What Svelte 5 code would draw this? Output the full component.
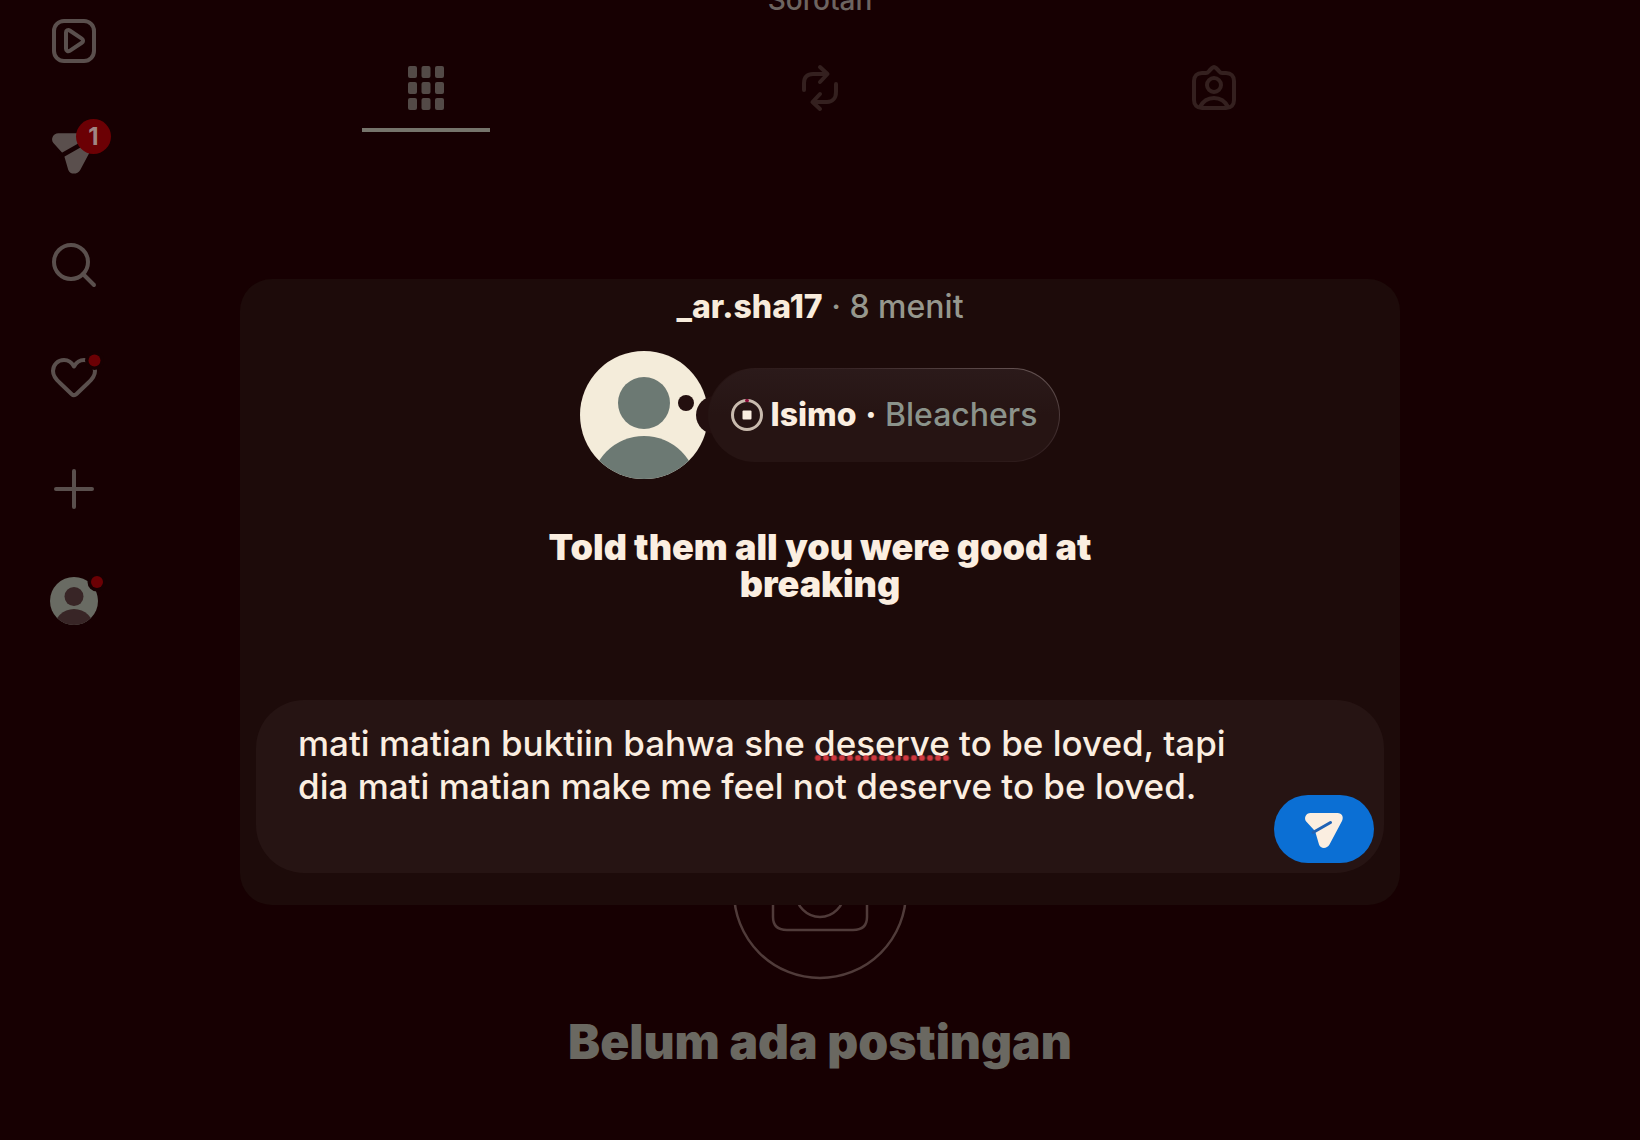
<script>
  const misspelled = "deserve";

  let draft = $state(
    "mati matian buktiin bahwa she deserve to be loved, tapi dia mati matian make me feel not deserve to be loved."
  );
  let activeTab = $state("posts");
  let input = $state(null);
  let mark = $state(null); // { left, width } of the spelling dots, in px

  const nav = [
    { id: "reels", label: "Reels" },
    { id: "messages", label: "Pesan" },
    { id: "search", label: "Cari" },
    { id: "activity", label: "Notifikasi" },
    { id: "create", label: "Buat" },
    { id: "profile", label: "Profil" },
  ];

  const tabs = [
    { id: "posts", label: "Postingan" },
    { id: "reposts", label: "Postingan ulang" },
    { id: "tagged", label: "Ditandai" },
  ];

  // only a hit on the first line gets the dots
  $effect(() => {
    const hit = draft.indexOf(misspelled);
    if (!input || hit < 0) {
      mark = null;
      return;
    }
    const ctx = document.createElement("canvas").getContext("2d");
    const css = getComputedStyle(input);
    ctx.font = `${css.fontWeight} ${css.fontSize} ${css.fontFamily}`;
    const left = Math.round(ctx.measureText(draft.slice(0, hit)).width);
    const width = Math.round(ctx.measureText(misspelled).width);
    mark = left + width <= input.clientWidth ? { left, width } : null;
  });
</script>

{#snippet plane()}
  <path
    class="solid"
    d="M5.5 0H32.5C37 0 39 4 37 8L24.5 31.5C22 36 15.5 36 14 31.5L10.5 19.5L9 17L1.2 8.5C-1.5 5 1 0 5.5 0Z"
  />
  <path class="slit" d="M8 19.5L25.5 9.5" />
{/snippet}

<div class="page">
  <nav class="sidebar" aria-label="Menu utama">
    {#each nav as item}
      <a href="#{item.id}" aria-label={item.label}>
        {#if item.id === "reels"}
          <svg width="48" height="48" viewBox="0 0 48 48">
            <rect x="4" y="4" width="40" height="40" rx="10" />
            <path d="M16 15.5C16 13.5 18 12.5 19.7 13.5L31.8 21.6C33.5 22.8 33.5 24.7 31.8 25.8L19.7 33.8C18 34.8 16 33.8 16 31.8Z" />
          </svg>
        {:else if item.id === "messages"}
          <svg width="44" height="41" viewBox="0 0 38 35">{@render plane()}</svg>
          <span class="badge">1</span>
        {:else if item.id === "search"}
          <svg width="48" height="48" viewBox="0 0 48 48">
            <circle cx="21" cy="21" r="17" />
            <path d="M33 33L44 44" />
          </svg>
        {:else if item.id === "activity"}
          <svg width="48" height="48" viewBox="0 0 48 48">
            <path
              d="M34 7C29.5 7 26.5 9 24 13.5C21.5 9 18.5 7 14 7C8 7 3 11.5 3 18C3 23 6 26.5 10 30L21.5 41C23.3 42.7 24.7 42.7 26.5 41L38 30C42 26.5 45 23 45 18C45 11.5 40 7 34 7Z"
            />
            <circle class="cutout" cx="44.5" cy="7.5" r="9.5" />
            <circle class="dot" cx="44.5" cy="7.5" r="6" />
          </svg>
        {:else if item.id === "create"}
          <svg width="48" height="48" viewBox="0 0 48 48">
            <path d="M24 6V42M6 24H42" />
          </svg>
        {:else}
          <svg width="48" height="48" viewBox="0 0 48 48">
            <clipPath id="me"><circle cx="24" cy="24" r="24" /></clipPath>
            <g clip-path="url(#me)">
              <rect class="me-bg" width="48" height="48" />
              <circle class="me-fg" cx="24" cy="19.5" r="9.5" />
              <circle class="me-fg" cx="24" cy="52" r="20" />
            </g>
            <circle class="cutout" cx="47" cy="5" r="9.5" />
            <circle class="dot" cx="47" cy="5" r="6" />
          </svg>
        {/if}
      </a>
    {/each}
  </nav>

  <main>
    <p class="highlight">Sorotan</p>

    <div class="tabs" role="tablist">
      {#each tabs as tab}
        <button
          type="button"
          role="tab"
          aria-label={tab.label}
          aria-selected={activeTab === tab.id}
          class:active={activeTab === tab.id}
          onclick={() => (activeTab = tab.id)}
        >
          <svg width="48" height="48" viewBox="0 0 48 48">
            {#if tab.id === "posts"}
              {#each [2, 18, 34] as y}
                {#each [6, 19.5, 33] as x}
                  <rect class="solid" {x} {y} width="9" height="12" rx="2" />
                {/each}
              {/each}
            {:else if tab.id === "reposts"}
              <path d="M8 26V19C8 13 11.5 10 17 10H31M24 3L31.5 10L24 18" />
              <path d="M40 20V28C40 34 36.5 38 31 38H17M24 30L16.5 38L24 45" />
            {:else}
              <path
                d="M14 9H16C18 9 18.5 7.5 20 6L22 4C23.3 2.8 24.7 2.8 26 4L28 6C29.5 7.5 30 9 32 9H36C41 9 44 12 44 17V36C44 41 41 44 36 44H12C7 44 4 41 4 36V17C4 12 7 9 12 9Z"
              />
              <circle cx="24" cy="21" r="7" />
              <path d="M10 43C13 37 18 34 24 34C30 34 35 37 38 43" />
            {/if}
          </svg>
        </button>
      {/each}
    </div>

    <section class="empty">
      <svg width="176" height="176" viewBox="0 0 176 176">
        <circle cx="88" cy="88" r="86" />
        <path d="M55 50H61C66 50 67 39 73 39H103C109 39 110 50 115 50H121C130 50 135 55 135 64V113C135 122 130 126 121 126H55C46 126 41 122 41 113V64C41 55 46 50 55 50Z" />
        <circle cx="88" cy="89" r="24" />
      </svg>
      <h1>Belum ada postingan</h1>
    </section>
  </main>

  <div class="scrim">
    <div class="dialog" role="dialog" aria-label="Catatan">
      <p class="author"><strong>_ar.sha17</strong> · 8 menit</p>

      <div class="note">
        <svg class="avatar" width="128" height="128" viewBox="0 0 128 128">
          <clipPath id="face"><circle cx="64" cy="64" r="64" /></clipPath>
          <g clip-path="url(#face)">
            <rect class="face-bg" width="128" height="128" />
            <circle class="face-fg" cx="64" cy="52" r="26" />
            <circle class="face-fg" cx="64" cy="138" r="53" />
          </g>
          <circle class="tail" cx="106" cy="52" r="8" />
          <circle class="tail" cx="135" cy="64" r="19" />
        </svg>
        <div class="song">
          <svg width="32" height="32" viewBox="0 0 32 32">
            <circle cx="16" cy="16" r="14.5" />
            <path class="progress" d="M15.5 1.5H16.5" />
            <rect x="11.5" y="11.5" width="9" height="9" rx="1" />
          </svg>
          <span><strong>Isimo</strong> <b>·</b> Bleachers</span>
        </div>
      </div>

      <p class="lyric">Told them all you were good at breaking</p>

      <form class="composer" onsubmit={(e) => e.preventDefault()}>
        <div class="field">
          <textarea bind:this={input} bind:value={draft} rows="2" spellcheck="false" aria-label="Balas catatan"></textarea>
          {#if mark}
            <span class="typo" style="left: {mark.left}px; width: {mark.width}px"></span>
          {/if}
        </div>
        <button type="submit" aria-label="Kirim">
          <svg width="38" height="35" viewBox="0 0 38 35">{@render plane()}</svg>
        </button>
      </form>
    </div>
  </div>
</div>

<style>
  :global(body) {
    background: #170002;
  }
  .page {
    position: relative;
    display: grid;
    grid-template-columns: 148px 1fr 148px;
    min-height: 100vh;
    overflow: hidden;
    background: #170002;
    font-family: Inter, "Liberation Sans", sans-serif;
    --ink: #fbeee0;
    --dim: #5a4f4d;
  }
  * {
    box-sizing: border-box;
  }
  p,
  h1 {
    margin: 0;
  }
  button {
    padding: 0;
    border: 0;
    background: none;
    cursor: pointer;
  }
  svg {
    display: block;
    overflow: visible;
    fill: none;
    stroke: currentColor;
    stroke-width: 4;
    stroke-linecap: round;
    stroke-linejoin: round;
  }
  .solid {
    fill: currentColor;
    stroke: none;
  }
  .slit {
    stroke: var(--slit);
    stroke-width: 3;
  }

  .sidebar {
    display: flex;
    flex-direction: column;
    align-items: center;
    gap: 64px;
    padding-top: 17px;
  }
  .sidebar a {
    position: relative;
    display: grid;
    place-items: center;
    width: 48px;
    height: 48px;
    color: var(--dim);
    --slit: #170002;
  }
  .sidebar .slit {
    stroke-width: 4;
  }
  .badge {
    position: absolute;
    top: -10px;
    right: -13px;
    width: 35px;
    height: 35px;
    border-radius: 50%;
    background: #6b0004;
    color: #a08583;
    font-size: 24px;
    font-weight: 700;
    line-height: 36px;
    text-align: center;
  }
  .cutout {
    fill: #170002;
    stroke: none;
  }
  .dot {
    fill: #6b0004;
    stroke: none;
  }
  .me-bg {
    fill: #696b63;
    stroke: none;
  }
  .me-fg {
    fill: #382526;
    stroke: none;
  }

  main {
    display: flex;
    flex-direction: column;
    align-items: center;
  }
  .highlight {
    margin-top: -18px;
    color: #6d6460;
    font-size: 28px;
    font-weight: 500;
    line-height: 36px;
  }
  .tabs {
    display: grid;
    grid-template-columns: repeat(3, 1fr);
    justify-items: center;
    width: 88%;
    margin-top: 46px;
  }
  .tabs button {
    display: flex;
    justify-content: center;
    width: 128px;
    height: 68px;
    border-bottom: 4px solid transparent;
    color: #34201f;
  }
  .tabs .active {
    border-color: #76746b;
    color: #534a47;
  }

  .empty {
    display: flex;
    flex-direction: column;
    align-items: center;
    margin-top: 672px;
    color: #503b3a;
  }
  .empty svg {
    stroke-width: 2.5;
  }
  h1 {
    margin-top: 34px;
    color: #6a6861;
    font-size: 48px;
    font-weight: 900;
    line-height: 56px;
  }

  .scrim {
    position: absolute;
    inset: 0;
    display: flex;
    justify-content: center;
    align-items: flex-start;
    padding: 279px 16px 16px;
  }
  .dialog {
    display: flex;
    flex-direction: column;
    align-items: center;
    width: 100%;
    max-width: 1160px;
    padding: 10px 16px 32px;
    border-radius: 32px;
    background: #1d0b0a;
    color: var(--ink);
  }
  .author {
    color: #96978d;
    font-size: 32px;
    font-weight: 500;
    line-height: 36px;
  }
  .author strong {
    color: #f8ecdc;
    font-weight: 800;
  }

  .note {
    display: flex;
    align-items: center;
    margin-top: 26px;
  }
  .avatar * {
    stroke: none;
  }
  .face-bg {
    fill: #f4ecda;
  }
  .face-fg {
    fill: #6c7973;
  }
  .tail {
    fill: #230f0f;
  }
  .song {
    display: flex;
    align-items: center;
    gap: 8px;
    height: 94px;
    padding: 0 22px;
    border: 1px solid transparent;
    border-radius: 47px;
    background:
      linear-gradient(#2b1a1a, #261413 50%) padding-box,
      linear-gradient(200deg, #6d5c5b, #382526 35%, #261413 60%) border-box;
    color: #8b938b;
    font-size: 32px;
    font-weight: 500;
    line-height: 40px;
  }
  .song svg {
    color: #c9bbae;
    stroke-width: 3;
  }
  .song rect {
    fill: var(--ink);
    stroke: none;
  }
  .progress {
    stroke: #8c0a38;
  }
  .song strong,
  .song b {
    color: var(--ink);
    font-weight: 800;
  }

  .lyric {
    width: 592px;
    margin-top: 50px;
    font-size: 36px;
    font-weight: 900;
    line-height: 37px;
    text-align: center;
  }

  .composer {
    position: relative;
    width: 100%;
    min-height: 173px;
    margin-top: 97px;
    padding: 22px 144px 64px 42px;
    border-radius: 48px;
    background: #261413;
  }
  .field {
    position: relative;
  }
  textarea {
    display: block;
    width: 100%;
    margin: 0;
    padding: 0;
    border: 0;
    background: none;
    color: var(--ink);
    font-family: inherit;
    font-size: 35px;
    font-weight: 500;
    line-height: 43px;
    outline: none;
    overflow: hidden;
    resize: none;
  }
  .typo {
    position: absolute;
    top: 33px;
    height: 6px;
    background: radial-gradient(circle, #d0383e 2px, transparent 4px) left top / 8px 6px repeat-x;
    pointer-events: none;
  }
  .composer button {
    position: absolute;
    right: 10px;
    bottom: 10px;
    display: grid;
    place-items: center;
    width: 100px;
    height: 68px;
    padding-top: 3px;
    border-radius: 34px;
    background: #0b6fd4;
    color: var(--ink);
    --slit: #1f62b5;
  }
</style>
